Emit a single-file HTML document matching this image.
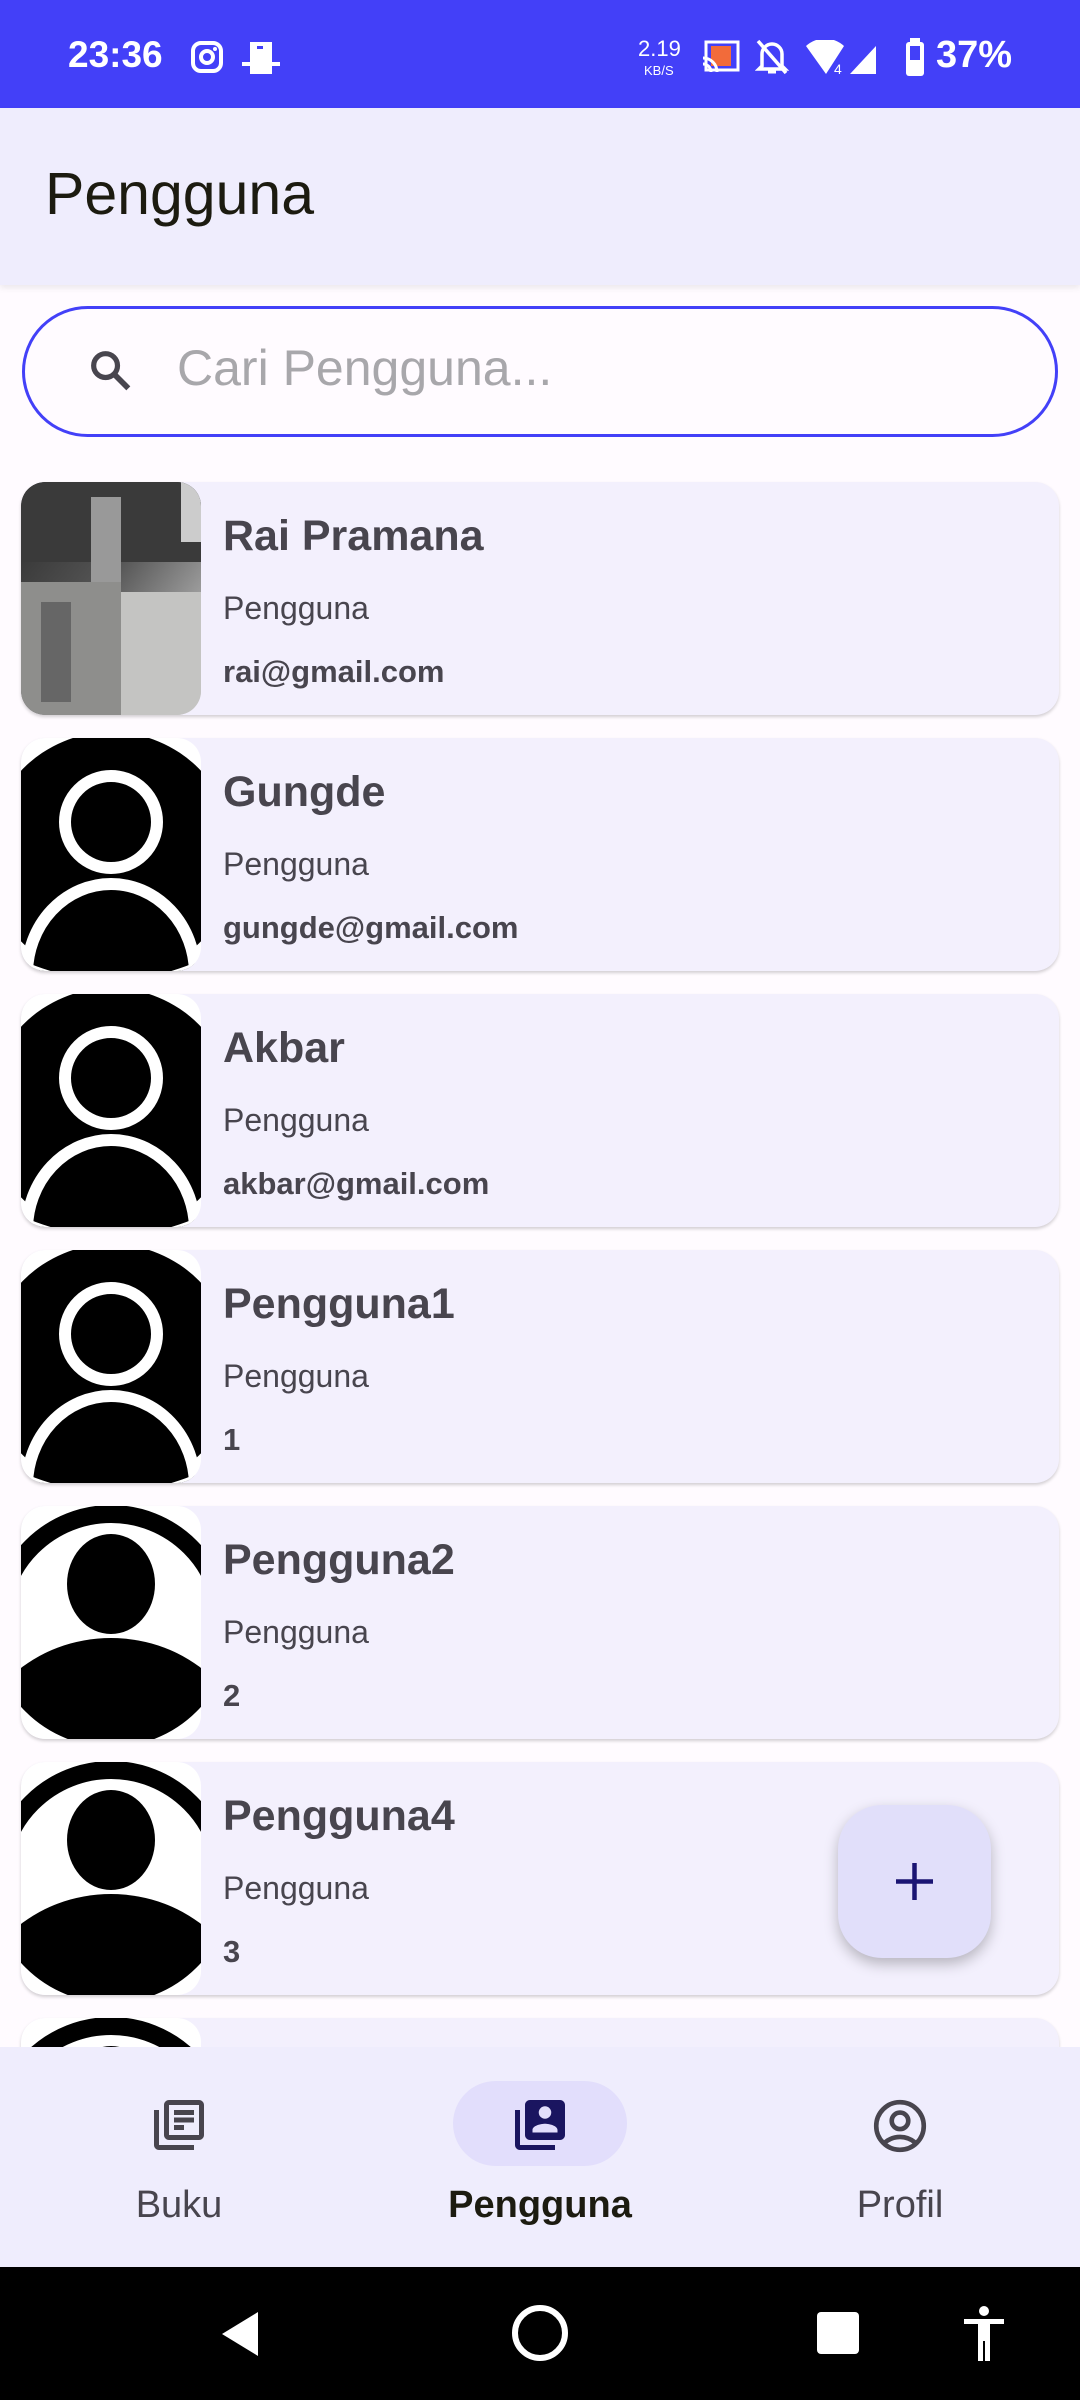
<!DOCTYPE html>
<html><head><meta charset="utf-8">
<style>
*{box-sizing:border-box;margin:0;padding:0}
body{width:1080px;height:2400px;overflow:hidden;background:#FFFBFF;font-family:"Liberation Sans",sans-serif;position:relative}
.sb{position:absolute;left:0;top:0;width:1080px;height:108px;background:#4340F8;color:#fff}
.app{position:absolute;left:0;top:108px;width:1080px;height:177px;background:#EFEDFD;box-shadow:0 3px 6px rgba(0,0,0,.08)}
.app h1{position:absolute;left:45px;top:52px;font-weight:normal;font-size:59px;color:#1C1B10}
.search{position:absolute;left:22px;top:306px;width:1036px;height:131px;border:3px solid #4340F8;border-radius:66px;background:#FFFBFF}
.search span{position:absolute;left:152px;top:30px;font-size:50px;color:#A8A7AB}
.card{position:absolute;left:21px;width:1038px;height:233px;background:#F3F0FD;border-radius:24px;box-shadow:0 2px 3px rgba(0,0,0,.18);overflow:hidden}
.card svg{position:absolute;left:0;top:0}
.nm{position:absolute;left:202px;top:30px;font-size:43px;font-weight:bold;color:#48454E}
.rl{position:absolute;left:202px;top:108px;font-size:32px;color:#48454E}
.em{position:absolute;left:202px;top:172px;font-size:31px;font-weight:bold;color:#48454E}
.nav{position:absolute;left:0;top:2047px;width:1080px;height:220px;background:#EFEDFD}
.lbl{position:absolute;top:137px;font-size:38px;color:#48454E;text-align:center;width:300px}
.sys{position:absolute;left:0;top:2267px;width:1080px;height:133px;background:#000}
.fab{position:absolute;left:838px;top:1805px;width:153px;height:153px;border-radius:44px;background:#E1DFFA;box-shadow:0 6px 14px rgba(0,0,0,.25)}
</style></head><body>
<svg width="0" height="0" style="position:absolute"><defs>
<clipPath id="c1"><rect width="180" height="233" rx="24"/></clipPath>
<clipPath id="c2"><circle cx="90" cy="120" r="112"/></clipPath>
<g id="avA"><g clip-path="url(#c1)"><rect width="180" height="233" fill="#fff"/><circle cx="90" cy="118" r="124" fill="#000"/><path d="M6 236A84 90 0 0 1 174 236" fill="#000" stroke="#fff" stroke-width="12"/><circle cx="90" cy="84" r="46" fill="#000" stroke="#fff" stroke-width="12"/><path d="M0 222Q90 262 180 222V240H0z" fill="#fff"/></g></g>
<g id="avB"><g clip-path="url(#c1)"><rect width="180" height="233" fill="#fff"/><circle cx="90" cy="120" r="112" fill="none" stroke="#000" stroke-width="18"/><g clip-path="url(#c2)"><ellipse cx="90" cy="260" rx="140" ry="128" fill="#000"/></g><ellipse cx="90" cy="78" rx="44" ry="50" fill="#000"/></g></g>
</defs></svg>
<div class="sb">
 <div style="position:absolute;left:68px;top:34px;font-size:37px;font-weight:bold">23:36</div>
 <svg style="position:absolute;left:190px;top:40px" width="34" height="34" viewBox="0 0 34 34"><rect x="3" y="3" width="28" height="28" rx="8" fill="none" stroke="#fff" stroke-width="4"/><circle cx="17" cy="17" r="6" fill="none" stroke="#fff" stroke-width="4"/><circle cx="25" cy="9" r="2" fill="#fff"/></svg>
 <svg style="position:absolute;left:242px;top:40px" width="38" height="36" viewBox="0 0 38 36"><rect x="8" y="2" width="22" height="32" fill="#fff"/><rect x="0" y="22" width="38" height="4" fill="#fff"/><rect x="15" y="6" width="6" height="3" fill="#4340F8"/></svg>
 <div style="position:absolute;left:638px;top:36px;font-size:22px">2.19</div>
 <div style="position:absolute;left:644px;top:63px;font-size:13px">KB/S</div>
 <svg style="position:absolute;left:702px;top:40px" width="38" height="34" viewBox="0 0 38 34"><rect x="4" y="2" width="32" height="28" fill="none" stroke="#fff" stroke-width="3"/><rect x="9" y="6" width="20" height="20" fill="#F26B3A"/><path d="M1 18a14 14 0 0 1 14 14M1 24a8 8 0 0 1 8 8" stroke="#fff" stroke-width="3" fill="none"/></svg>
 <svg style="position:absolute;left:755px;top:38px" width="34" height="38" viewBox="0 0 34 38"><path d="M7 28V16a10 10 0 0 1 20 0v12l3 3H4z" fill="none" stroke="#fff" stroke-width="3.5"/><path d="M3 3l28 32" stroke="#fff" stroke-width="3.5"/><path d="M13 34h8" stroke="#fff" stroke-width="3"/></svg>
 <svg style="position:absolute;left:806px;top:40px" width="80" height="36" viewBox="0 0 80 36"><path d="M0 6a28 28 0 0 1 38 0L20 34z" fill="#fff"/><path d="M44 34L70 6v28z" fill="#fff"/><text x="28" y="34" font-size="14" fill="#fff" font-family="Liberation Sans">4</text></svg>
 <svg style="position:absolute;left:904px;top:38px" width="22" height="38" viewBox="0 0 22 38"><rect x="6" y="0" width="10" height="4" fill="#fff"/><rect x="2" y="4" width="18" height="34" rx="3" fill="#fff"/><rect x="6" y="8" width="10" height="14" fill="#4340F8"/></svg>
 <div style="position:absolute;left:936px;top:34px;font-size:38px;font-weight:bold">37%</div>
</div>
<div class="app"><h1>Pengguna</h1></div>
<div class="search">
 <svg style="position:absolute;left:60px;top:36px" width="52" height="52" viewBox="0 0 24 24"><circle cx="9.5" cy="9.5" r="5.5" fill="none" stroke="#48454E" stroke-width="2.4"/><path d="M13.5 13.5L20 20" stroke="#48454E" stroke-width="2.6"/></svg>
 <span>Cari Pengguna...</span>
</div>

<div class="card" style="top:482px">
 <svg width="180" height="233" viewBox="0 0 180 233"><defs><linearGradient id="g" x1="0" y1="0" x2="1" y2="1"><stop offset="0" stop-color="#2a2a2a"/><stop offset=".45" stop-color="#555"/><stop offset="1" stop-color="#ddd"/></linearGradient></defs><g clip-path="url(#c1)"><rect width="180" height="233" fill="url(#g)"/><rect x="0" y="0" width="180" height="80" fill="#3a3a3a"/><rect x="160" y="0" width="20" height="60" fill="#ccc"/><rect x="70" y="15" width="30" height="90" fill="#999"/><rect x="0" y="100" width="100" height="133" fill="#8e8e8c"/><rect x="100" y="110" width="80" height="123" fill="#c4c4c2"/><rect x="20" y="120" width="30" height="100" fill="#666"/></g></svg>
 <div class="nm">Rai Pramana</div><div class="rl">Pengguna</div><div class="em">rai@gmail.com</div>
</div>

<div class="card" style="top:738px"><svg width="180" height="233" viewBox="0 0 180 233"><use href="#avA"/></svg>
 <div class="nm">Gungde</div><div class="rl">Pengguna</div><div class="em">gungde@gmail.com</div></div>

<div class="card" style="top:994px"><svg width="180" height="233" viewBox="0 0 180 233"><use href="#avA"/></svg>
 <div class="nm">Akbar</div><div class="rl">Pengguna</div><div class="em">akbar@gmail.com</div></div>

<div class="card" style="top:1250px"><svg width="180" height="233" viewBox="0 0 180 233"><use href="#avA"/></svg>
 <div class="nm">Pengguna1</div><div class="rl">Pengguna</div><div class="em">1</div></div>

<div class="card" style="top:1506px"><svg width="180" height="233" viewBox="0 0 180 233"><use href="#avB"/></svg>
 <div class="nm">Pengguna2</div><div class="rl">Pengguna</div><div class="em">2</div></div>

<div class="card" style="top:1762px"><svg width="180" height="233" viewBox="0 0 180 233"><use href="#avB"/></svg>
 <div class="nm">Pengguna4</div><div class="rl">Pengguna</div><div class="em">3</div></div>

<div class="card" style="top:2018px"><svg width="180" height="233" viewBox="0 0 180 233"><use href="#avB"/></svg></div>

<div class="fab"><svg style="position:absolute;left:54px;top:54px" width="45" height="45" viewBox="0 0 45 45"><path d="M22.5 4v37M4 22.5h37" stroke="#1A1573" stroke-width="4.5"/></svg></div>

<div class="nav">
 <svg style="position:absolute;left:149px;top:48px" width="60" height="60" viewBox="0 0 24 24" fill="#48454E"><path d="M4 6H2v14c0 1.1.9 2 2 2h14v-2H4V6zm16-4H8c-1.1 0-2 .9-2 2v12c0 1.1.9 2 2 2h12c1.1 0 2-.9 2-2V4c0-1.1-.9-2-2-2zm0 14H8V4h12v12zM10 9h8v2h-8zm0 3h4v2h-4zm0-6h8v2h-8z"/></svg>
 <div class="lbl" style="left:29px">Buku</div>
 <div style="position:absolute;left:453px;top:34px;width:174px;height:85px;border-radius:43px;background:#E2DEFC"></div>
 <svg style="position:absolute;left:510px;top:48px" width="60" height="60" viewBox="0 0 24 24" fill="#1A1560"><path d="M4 6H2v14c0 1.1.9 2 2 2h14v-2H4V6zm16-4H8c-1.1 0-2 .9-2 2v12c0 1.1.9 2 2 2h12c1.1 0 2-.9 2-2V4c0-1.1-.9-2-2-2zm-6 2.5a2.5 2.5 0 1 1 0 5 2.5 2.5 0 0 1 0-5zM19 15H9v-1c0-1.7 3.3-2.5 5-2.5s5 .8 5 2.5v1z"/></svg>
 <div class="lbl" style="left:390px;font-weight:bold;color:#1C1B10">Pengguna</div>
 <svg style="position:absolute;left:869px;top:48px" width="62" height="62" viewBox="0 0 24 24"><circle cx="12" cy="12" r="9.2" fill="none" stroke="#48454E" stroke-width="1.8"/><circle cx="12" cy="10" r="3.2" fill="none" stroke="#48454E" stroke-width="1.8"/><path d="M6 18.5c3.5-3 8.5-3 12 0" fill="none" stroke="#48454E" stroke-width="1.8"/></svg>
 <div class="lbl" style="left:750px">Profil</div>
</div>

<div class="sys">
 <svg style="position:absolute;left:218px;top:42px" width="44" height="50" viewBox="0 0 44 50"><path d="M40 3v44L4 25z" fill="#fff"/></svg>
 <svg style="position:absolute;left:511px;top:37px" width="58" height="58" viewBox="0 0 58 58"><circle cx="29" cy="29" r="25" fill="none" stroke="#fff" stroke-width="6"/></svg>
 <div style="position:absolute;left:817px;top:45px;width:42px;height:42px;background:#fff;border-radius:4px"></div>
 <svg style="position:absolute;left:962px;top:38px" width="44" height="56" viewBox="0 0 44 56"><circle cx="22" cy="6" r="5" fill="#fff"/><path d="M2 14h40v5H28v37h-5V36h-2v20h-5V19H2z" fill="#fff"/></svg>
</div>
</body></html>
